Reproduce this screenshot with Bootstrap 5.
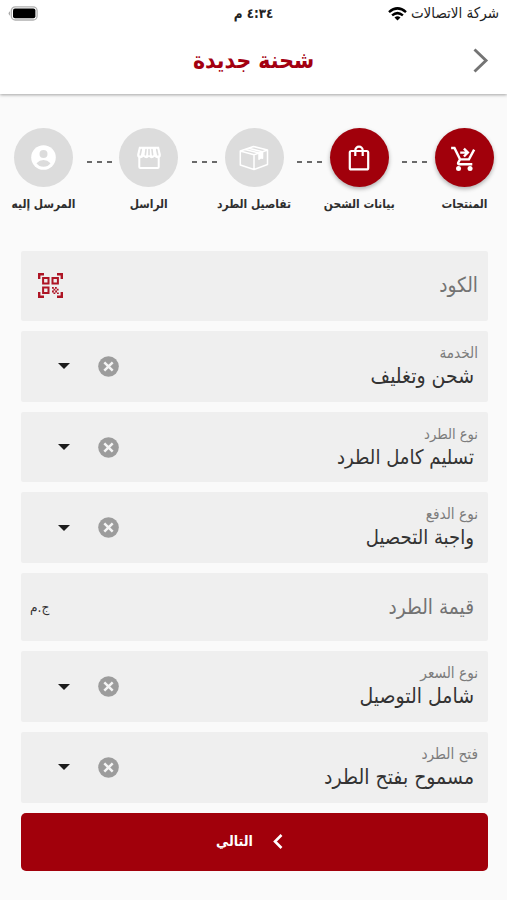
<!DOCTYPE html>
<html lang="ar" dir="rtl">
<head>
<meta charset="utf-8">
<meta name="viewport" content="width=device-width, initial-scale=1">
<title>شحنة جديدة</title>
<link href="https://cdn.jsdelivr.net/npm/bootstrap@5.3.0/dist/css/bootstrap.min.css" rel="stylesheet">
<style>
body{background:#fafafa;font-family:"DejaVu Sans Condensed","DejaVu Sans",sans-serif;color:#333;height:900px;overflow:hidden}
svg{display:block;flex:none}
.top-area{height:94px;background:#fff;box-shadow:0 1px 3px rgba(0,0,0,.35)}
.status-row,.title-row{display:grid;grid-template-columns:1fr auto 1fr;align-items:center}
.status-row{height:27px;padding:0 8px;font-size:15px;line-height:27px;color:#222}
.clock{font-size:13.3px;font-weight:700;color:#222}
.title-row{height:66px;padding:0 18px}
.page-title{font-size:22.8px;line-height:30px;color:#a30010;font-weight:700}
.steps{padding:34px 13px 0 14px;height:156.6px}
.step-item{width:59px}
.step-dot{width:59px;height:59px;background:#dcdcdc}
.step-dot.done{background:#a1000b;box-shadow:0 2px 4px rgba(0,0,0,.3)}
.step-label{font-size:11.9px;font-weight:700;white-space:nowrap;line-height:20px;margin-top:7px;color:#2e2e2e}
.dashes{height:68px;gap:5px;padding-left:6px}
.dashes i{width:5px;height:2px;background:#6a6a6a}
.form-area{padding:0 19px 0 21px;gap:10px}
.field{height:70.6px;background:#efefef;border-radius:2px;padding:0 10px 0 9px}
.field.amount{height:68.5px}
.cap{font-size:15.2px;color:#7c7c7c;line-height:18px;padding-top:1px;box-sizing:content-box}
.cap.tight{font-size:14.6px}
.val{font-size:21px;color:#333;line-height:27px;padding:1px 4px 0 0}
.val.tight{font-size:20.1px}
.hint{font-size:20.6px;color:#737373;line-height:28px;padding-bottom:1px}
.unit{font-size:13.6px;color:#333}
.field-tools{gap:28px;padding-left:28px}
.next-btn{height:58px;background:#a1000b;color:#fff;border-radius:5px;font-size:14.2px;font-weight:700;gap:20px;padding:0 22px 0 12px}
</style>
<script src="https://cdn.jsdelivr.net/npm/bootstrap@5.3.0/dist/js/bootstrap.bundle.min.js"></script>
</head>
<body>
<svg width="0" height="0" style="position:absolute" aria-hidden="true">
<symbol id="clear" viewBox="0 0 21 21"><circle cx="10.5" cy="10.5" r="10.3" fill="#9c9c9c"/><path d="M6.300 6.300l8.400 8.400m0-8.400l-8.400 8.400" stroke="#f4f4f4" stroke-width="2.500"/></symbol>
<symbol id="caret" viewBox="0 0 12 6"><path d="M0 0h12L6 6z" fill="#1c1c1c"/></symbol>
</svg>
<header class="top-area">
<div class="status-row">
<div class="d-flex align-items-center"><span>شركة الاتصالات</span>
<svg class="me-1" width="19" height="14" viewBox="0 0 19 14" fill="none" stroke="#000" stroke-width="2.5"><path d="M1 5.1Q9.5-2.3 18 5.1M4.1 8.4Q9.5 3.9 14.9 8.4"/><path d="M9.5 13.6L6.5 10.4Q9.5 8 12.5 10.4z" fill="#000" stroke="none"/></svg></div>
<div class="clock">٤:٣٤ م</div>
<svg class="me-auto" width="30" height="15" viewBox="0 0 30 15"><path d="M2 5.3Q-.8 7.5 2 9.7z" fill="#aaa"/><rect x="3.3" y=".8" width="25.8" height="13.2" rx="4" fill="#fff" stroke="#b0b0b0" stroke-width="1.3"/><rect x="5" y="2.5" width="22.4" height="9.8" rx="2" fill="#000"/></svg>
</div>
<div class="title-row">
<svg width="17" height="25" viewBox="0 0 17 25" fill="none" stroke="#747474" stroke-width="2.9"><path d="M2.5 1.5L14 12.5 2.5 23.5"/></svg>
<h1 class="page-title m-0">شحنة جديدة</h1>
<span></span>
</div>
</header>
<main>
<div class="steps d-flex justify-content-between">
<div class="step-item d-flex flex-column align-items-center">
<div class="step-dot done rounded-circle d-flex align-items-center justify-content-center"><svg class="me-1" width="26" height="26" viewBox="0 0 28 28" fill="none" stroke="#fff" stroke-width="2.600"><path d="M1.200 3.300h3.600l6 12.200h9.600L26 5M10.800 15.500l-2 3.600q-.6 1.600 1.200 1.600h14M11 8.200h7M15 4l4.200 4.200L15 12.400"/><g fill="#fff" stroke="none"><circle cx="9.200" cy="25.200" r="2.700"/><circle cx="21.600" cy="25.200" r="2.700"/></g></svg></div>
<div class="step-label">المنتجات</div></div>
<div class="dashes d-flex align-items-center"><i></i><i></i><i></i></div>
<div class="step-item d-flex flex-column align-items-center">
<div class="step-dot done rounded-circle d-flex align-items-center justify-content-center"><svg width="22" height="26" viewBox="0 0 22 26" fill="none" stroke="#fff" stroke-width="2.200"><rect x="1.800" y="6" width="18.400" height="18.400" rx="1.500"/><path d="M7.300 11V5.500a3.700 3.900 0 0 1 7.400 0V11"/></svg></div>
<div class="step-label">بيانات الشحن</div></div>
<div class="dashes d-flex align-items-center"><i></i><i></i><i></i></div>
<div class="step-item d-flex flex-column align-items-center">
<div class="step-dot rounded-circle d-flex align-items-center justify-content-center"><svg width="30" height="26" viewBox="0 0 30 26" fill="none" stroke="#fff" stroke-width="1.500" stroke-linejoin="round"><path d="M1.300 6L14.500 1.500 28.500 5v14.500L15 24.500 1.300 20zM1.300 6L15 9.800 28.500 5M15 9.800v14.700M6 4.500l14 3.600M9.500 3.200l14 3.600"/><path d="M20 8.100l3.500-1.300v6.500l-1.700-.6-1.800 1.600z" fill="#fff"/></svg></div>
<div class="step-label">تفاصيل الطرد</div></div>
<div class="dashes d-flex align-items-center"><i></i><i></i><i></i></div>
<div class="step-item d-flex flex-column align-items-center">
<div class="step-dot rounded-circle d-flex align-items-center justify-content-center"><svg width="26" height="24" viewBox="0 0 26 24"><path fill="#fff" fill-rule="evenodd" d="M3 .8h20l1.800 7.400q.5 2.200-1.100 3.500V21q0 2-2 2H4.300q-2 0-2-2v-9.300Q.7 10.400 1.200 8.200zM4.300 12.200V21h17.400v-8.800q-2 0-3.200-1.400-1.200 1.400-2.800 1.400T13 10.800q-1.200 1.400-2.700 1.400T7.500 10.800q-1.200 1.400-3.200 1.400z"/><path d="M5.300 3.500L4.200 8.800M10 3.500L9.400 8.800M16 3.500l.6 5.300M20.700 3.500l1.100 5.300M13 3.500v5.300" stroke="#dcdcdc" stroke-width="1.600" stroke-linecap="round"/></svg></div>
<div class="step-label">الراسل</div></div>
<div class="dashes d-flex align-items-center"><i></i><i></i><i></i></div>
<div class="step-item d-flex flex-column align-items-center">
<div class="step-dot rounded-circle d-flex align-items-center justify-content-center"><svg width="25" height="25" viewBox="0 0 25 25"><circle cx="12.500" cy="12.500" r="12.300" fill="#fff"/><circle cx="12.500" cy="9" r="4" fill="#dcdcdc"/><path d="M5.500 18.200q3-3.200 7-3.200t7 3.200q-2.500 3.600-7 3.600t-7-3.600z" fill="#dcdcdc"/></svg></div>
<div class="step-label">المرسل إليه</div></div>
</div>
<form class="form-area d-flex flex-column">
<div class="field d-flex align-items-center justify-content-between"><span class="hint">الكود</span>
<svg class="ms-2" width="25" height="25" viewBox="0 0 25 25" fill="none" stroke="#ae1525" stroke-width="2.400"><path d="M1.200 6V1.200H6M19 1.200h4.800V6M1.200 19v4.800H6M19 23.800h4.800V19"/><path d="M5.100 5.100h5.400v5.400H5.100zM14.500 5.100h5.400v5.400h-5.400zM5.100 14.500h5.400v5.400H5.100z" stroke-width="2"/><path d="M14 14h1.800v1.800H14zM17 14h1.800v1.800H17zM15.500 15.800h1.800v1.800h-1.800zM18.800 15.800h1.800v1.800h-1.800zM14 17.600h1.800v1.800H14zM17.200 17.600H19v1.800h-1.800zM15.500 19.400h1.800v1.600h-1.800zM19 19.400h1.800v1.600H19z" fill="#ae1525" stroke="none"/></svg></div>
<div class="field d-flex align-items-center justify-content-between"><div><div class="cap">الخدمة</div><div class="val">شحن وتغليف</div></div><div class="field-tools d-flex align-items-center"><svg width="21" height="21"><use href="#clear"/></svg><svg width="12" height="6"><use href="#caret"/></svg></div></div>
<div class="field d-flex align-items-center justify-content-between"><div><div class="cap tight">نوع الطرد</div><div class="val tight">تسليم كامل الطرد</div></div><div class="field-tools d-flex align-items-center"><svg width="21" height="21"><use href="#clear"/></svg><svg width="12" height="6"><use href="#caret"/></svg></div></div>
<div class="field d-flex align-items-center justify-content-between"><div><div class="cap">نوع الدفع</div><div class="val tight">واجبة التحصيل</div></div><div class="field-tools d-flex align-items-center"><svg width="21" height="21"><use href="#clear"/></svg><svg width="12" height="6"><use href="#caret"/></svg></div></div>
<div class="field amount d-flex align-items-center justify-content-between"><span class="hint pe-1">قيمة الطرد</span><span class="unit">ج.م</span></div>
<div class="field d-flex align-items-center justify-content-between"><div><div class="cap">نوع السعر</div><div class="val">شامل التوصيل</div></div><div class="field-tools d-flex align-items-center"><svg width="21" height="21"><use href="#clear"/></svg><svg width="12" height="6"><use href="#caret"/></svg></div></div>
<div class="field d-flex align-items-center justify-content-between"><div><div class="cap">فتح الطرد</div><div class="val">مسموح بفتح الطرد</div></div><div class="field-tools d-flex align-items-center"><svg width="21" height="21"><use href="#clear"/></svg><svg width="12" height="6"><use href="#caret"/></svg></div></div>
<button type="button" class="next-btn btn d-flex align-items-center justify-content-center"><svg width="10" height="15" viewBox="0 0 10 15" fill="none" stroke="#fff" stroke-width="2.600"><path d="M8.500 1L2 7.500 8.500 14"/></svg><span>التالي</span></button>
</form>
</main>
</body>
</html>
